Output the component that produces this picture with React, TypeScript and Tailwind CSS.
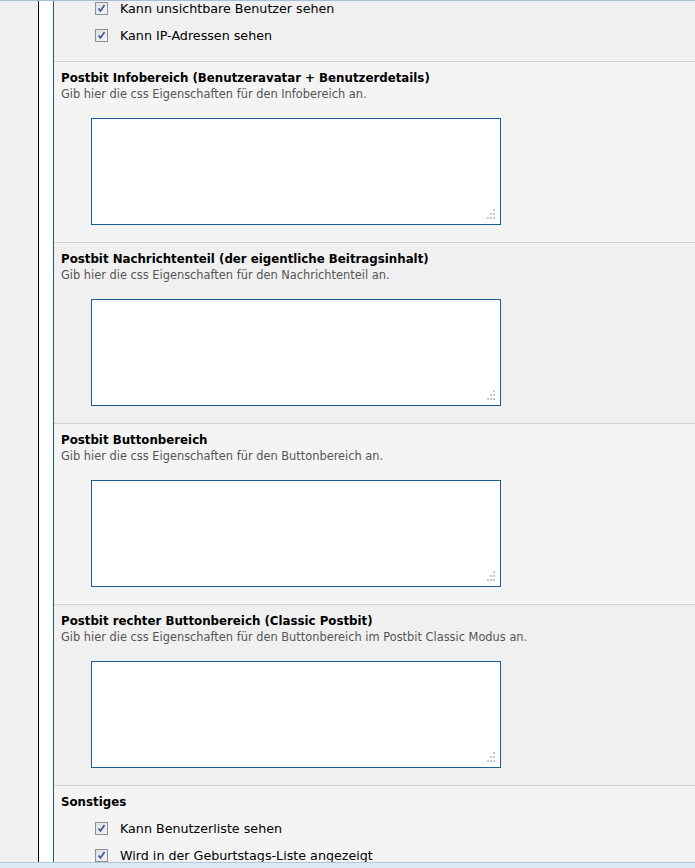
const Check = () => (
  <span className="w-[13px] h-[13px] border border-[#8f8f8f] bg-gradient-to-br from-[#dcdfe6] to-[#f3f4f7] flex items-center justify-center shrink-0">
    <svg width="9" height="9" viewBox="0 0 9 9">
      <path d="M1.5 4.5 L3.5 7 L7.5 1" fill="none" stroke="#3b5499" strokeWidth="1.6" />
    </svg>
  </span>
);

const CheckRow = ({ label }: { label: string }) => (
  <div className="h-[27px] flex items-center pl-[41px] gap-[12px] text-[12.7px] text-black">
    <Check />
    <span>{label}</span>
  </div>
);

const Grip = () => (
  <svg width="12" height="12" viewBox="0 0 12 12" className="absolute right-[4px] bottom-[4px]">
    {[
      [9, 1],
      [6, 5],
      [9, 5],
      [3, 9],
      [6, 9],
      [9, 9],
    ].map(([x, y], i) => (
      <rect key={i} x={x} y={y} width="2" height="2" fill="#c8c8c8" />
    ))}
  </svg>
);

const TextSection = ({ title, desc, bg }: { title: string; desc: string; bg: string }) => (
  <div className={`border-t border-[#d0d0d0] h-[181px] shrink-0 pt-[8px] pl-[7px] ${bg}`}>
    <div className="text-[11.8px] font-bold text-black leading-[17px]">{title}</div>
    <div className="text-[11.4px] text-[#555] leading-[15px]">{desc}</div>
    <div className="relative mt-[16px] ml-[30px] w-[410px] h-[107px] border border-[#1d5c92] bg-white">
      <Grip />
    </div>
  </div>
);

const sections = [
  {
    title: "Postbit Infobereich (Benutzeravatar + Benutzerdetails)",
    desc: "Gib hier die css Eigenschaften für den Infobereich an.",
    bg: "bg-[#f4f4f4]",
  },
  {
    title: "Postbit Nachrichtenteil (der eigentliche Beitragsinhalt)",
    desc: "Gib hier die css Eigenschaften für den Nachrichtenteil an.",
    bg: "bg-[#f0f0f0]",
  },
  {
    title: "Postbit Buttonbereich",
    desc: "Gib hier die css Eigenschaften für den Buttonbereich an.",
    bg: "bg-[#f4f4f4]",
  },
  {
    title: "Postbit rechter Buttonbereich (Classic Postbit)",
    desc: "Gib hier die css Eigenschaften für den Buttonbereich im Postbit Classic Modus an.",
    bg: "bg-[#f0f0f0]",
  },
];

export default function App() {
  return (
    <div className="w-[695px] h-[868px] overflow-hidden flex flex-col bg-white" style={{ fontFamily: '"DejaVu Sans", Verdana, sans-serif' }}>
      <div className="h-px bg-[#a9bfd6] shrink-0" />
      <div className="flex flex-1 min-h-0">
        <div className="w-[38px] bg-[#f0f0f0] shrink-0" />
        <div className="w-px bg-black shrink-0" />
        <div className="w-[14px] bg-white shrink-0" />
        <div className="w-px bg-[#1d5c92] shrink-0" />
        <div className="flex-1 min-w-0 flex flex-col overflow-hidden">
          <div className="bg-[#f0f0f0] h-[60px] shrink-0">
            <div className="-mt-[6px]">
              <CheckRow label="Kann unsichtbare Benutzer sehen" />
              <CheckRow label="Kann IP-Adressen sehen" />
            </div>
          </div>
          {sections.map((s) => (
            <TextSection key={s.title} {...s} />
          ))}
          <div className="border-t border-[#d0d0d0] bg-[#f4f4f4] flex-1 pt-[8px] pl-[7px]">
            <div className="text-[11.8px] font-bold text-black leading-[17px]">Sonstiges</div>
            <div className="-ml-[7px] mt-[4px]">
              <CheckRow label="Kann Benutzerliste sehen" />
              <CheckRow label="Wird in der Geburtstags-Liste angezeigt" />
            </div>
          </div>
        </div>
      </div>
      <div className="h-[6px] shrink-0 border-t border-[#b3c7db] bg-[#dce9f6]" />
    </div>
  );
}
